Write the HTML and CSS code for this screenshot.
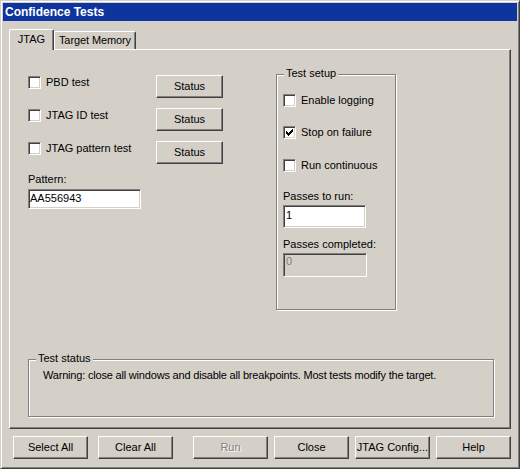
FILE: index.html
```html
<!DOCTYPE html>
<html>
<head>
<meta charset="utf-8">
<title>Confidence Tests</title>
<link rel="stylesheet" href="styles.css">
</head>
<body>
<div class="window">
  <div class="titlebar">Confidence Tests</div>
  <div class="client">
    <div class="tabs">
      <div class="tab active">JTAG</div>
      <div class="tab inactive">Target Memory</div>
    </div>
    <div class="panel">
      <div class="top">
        <div class="tests">
          <div class="test-rows">
            <div class="test-row">
              <div class="check"><span class="box"></span><span class="check-text">PBD test</span></div>
              <div class="btn status">Status</div>
            </div>
            <div class="test-row">
              <div class="check"><span class="box"></span><span class="check-text">JTAG ID test</span></div>
              <div class="btn status">Status</div>
            </div>
            <div class="test-row">
              <div class="check"><span class="box"></span><span class="check-text">JTAG pattern test</span></div>
              <div class="btn status">Status</div>
            </div>
          </div>
          <div class="field-label pattern-label">Pattern:</div>
          <div class="textbox pattern">AA556943</div>
        </div>
        <div class="group setup">
          <div class="legend">Test setup</div>
          <div class="check"><span class="box"></span><span class="check-text">Enable logging</span></div>
          <div class="check second"><span class="box"><svg class="tick" viewBox="0 0 9 9" width="9" height="9" shape-rendering="crispEdges"><rect x="1" y="3" width="1" height="3"/><rect x="2" y="4" width="1" height="3"/><rect x="3" y="5" width="1" height="3"/><rect x="4" y="4" width="1" height="3"/><rect x="5" y="3" width="1" height="3"/><rect x="6" y="2" width="1" height="3"/><rect x="7" y="1" width="1" height="3"/></svg></span><span class="check-text">Stop on failure</span></div>
          <div class="check third"><span class="box"></span><span class="check-text">Run continuous</span></div>
          <div class="field-label passes-label">Passes to run:</div>
          <div class="textbox passes">1</div>
          <div class="field-label completed-label">Passes completed:</div>
          <div class="textbox completed">0</div>
        </div>
      </div>
      <div class="group status-group">
        <div class="legend">Test status</div>
        <div class="warning">Warning: close all windows and disable all breakpoints. Most tests modify the target.</div>
      </div>
    </div>
    <div class="buttons">
      <div class="btn dlg select-all">Select All</div>
      <div class="btn dlg clear-all">Clear All</div>
      <div class="btn dlg run disabled">Run</div>
      <div class="btn dlg close">Close</div>
      <div class="btn dlg config">JTAG Config...</div>
      <div class="btn dlg help">Help</div>
    </div>
  </div>
</div>
</body>
</html>
```
FILE: styles.css
```css
* { box-sizing: border-box; }
body {
  margin: 0;
  background: #d4d0c8;
  font-family: "Liberation Sans", Arial, sans-serif;
  font-size: 11px;
  line-height: 13px;
  color: #000;
}
.window {
  width: 520px;
  height: 469px;
  background: #d4d0c8;
  border: 1px solid;
  border-color: #d4d0c8 #404040 #404040 #d4d0c8;
  box-shadow: inset 1px 1px 0 #fff, inset -1px -1px 0 #808080;
  padding: 2px;
}
.titlebar {
  height: 18px;
  background: #0e349e;
  color: #fff;
  font-weight: bold;
  font-size: 12px;
  line-height: 18px;
  padding-left: 2px;
}
.client {
  padding-left: 6px;
}
.tabs {
  display: flex;
  align-items: flex-end;
  height: 20px;
  margin-top: 8px;
}
.tab {
  text-align: center;
  border-top: 1px solid #fff;
  border-left: 1px solid #fff;
  border-right: 1px solid #404040;
  border-radius: 2px 2px 0 0;
  box-shadow: inset -1px 0 0 #808080;
  background: #d4d0c8;
  white-space: nowrap;
}
.tab.active {
  position: relative;
  z-index: 1;
  width: 45px;
  height: 21px;
  margin-bottom: -1px;
  padding-top: 3px;
}
.tab.inactive {
  width: 82px;
  height: 18px;
  padding-top: 2px;
  letter-spacing: -0.1px;
}
.panel {
  width: 502px;
  height: 380px;
  border: 1px solid;
  border-color: #fff #404040 #404040 #fff;
  box-shadow: inset -1px -1px 0 #808080;
  padding: 24px 0 0 18px;
}
.top {
  display: flex;
  align-items: flex-start;
}
.tests {
  width: 195px;
  margin-top: 1px;
}
.test-rows {
  display: flex;
  flex-direction: column;
  gap: 10px;
}
.test-row {
  display: flex;
  align-items: flex-start;
}
.test-row .check {
  width: 128px;
  margin-top: 1px;
}
.check {
  display: flex;
  align-items: center;
  height: 13px;
  white-space: nowrap;
}
.box {
  width: 13px;
  height: 13px;
  flex: none;
  background: #fff;
  border: 1px solid;
  border-color: #808080 #fff #fff #808080;
  box-shadow: inset 1px 1px 0 #404040, inset -1px -1px 0 #d4d0c8;
  padding: 1px;
  display: flex;
}
.tick { display: block; fill: #000; }
.check-text { margin-left: 5px; }
.btn {
  background: #d4d0c8;
  border: 1px solid;
  border-color: #fff #404040 #404040 #fff;
  box-shadow: inset -1px -1px 0 #808080;
  text-align: center;
  height: 23px;
  line-height: 21px;
  flex: none;
  white-space: nowrap;
}
.btn.status { width: 67px; }
.field-label { line-height: 13px; }
.pattern-label { margin-top: 9px; }
.textbox {
  background: #fff;
  border: 1px solid;
  border-color: #808080 #fff #fff #808080;
  box-shadow: inset 1px 1px 0 #404040, inset -1px -1px 0 #d4d0c8;
  padding: 0 2px;
  white-space: nowrap;
}
.pattern {
  width: 113px;
  height: 20px;
  line-height: 17px;
  margin-top: 3px;
  padding-left: 1px;
}
.group {
  position: relative;
  border: 1px solid #808080;
  box-shadow: 1px 1px 0 #fff, inset 1px 1px 0 #fff;
}
.legend {
  position: absolute;
  top: -8px;
  left: 7px;
  padding: 0 2px;
  background: #d4d0c8;
  line-height: 13px;
  white-space: nowrap;
}
.setup {
  width: 120px;
  height: 236px;
  margin-left: 53px;
  padding: 19px 6px 0 6px;
}
.setup .second { margin-top: 19px; }
.setup .third { margin-top: 20px; }
.passes-label { margin-top: 18px; }
.passes {
  width: 83px;
  height: 23px;
  line-height: 19px;
  margin-top: 2px;
}
.completed-label { margin-top: 10px; }
.completed {
  width: 84px;
  height: 24px;
  margin-top: 2px;
  background: #d4d0c8;
  color: #808080;
  line-height: 13px;
  padding-top: 1px;
}
.status-group {
  width: 466px;
  height: 58px;
  margin-top: 49px;
  padding: 9px 0 0 14px;
}
.warning {
  white-space: nowrap;
  letter-spacing: -0.19px;
}
.buttons {
  display: flex;
  margin-top: 7px;
  padding-left: 4px;
}
.btn.dlg { width: 75px; }
.clear-all { margin-left: 10px; }
.run { margin-left: 20px; }
.close { margin-left: 6px; }
.config { margin-left: 6px; }
.help { margin-left: 6px; }
.btn.disabled {
  color: #808080;
  text-shadow: 1px 1px 0 #fff;
}
```
